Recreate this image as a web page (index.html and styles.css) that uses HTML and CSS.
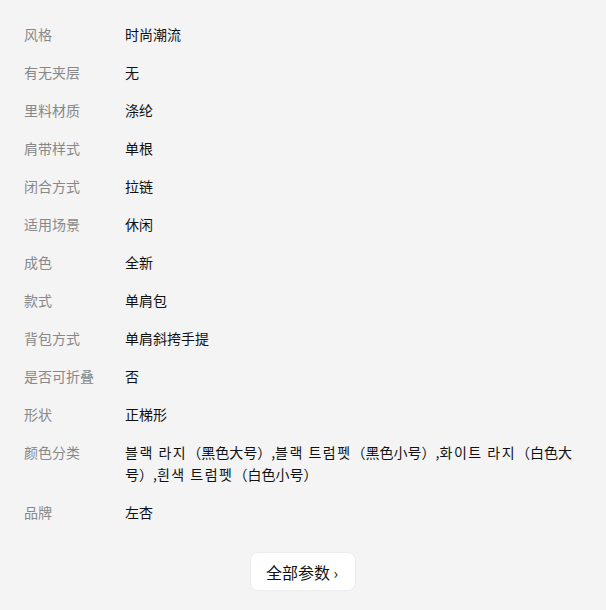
FILE: index.html
```html
<!DOCTYPE html>
<html lang="zh-CN">
<head>
    <meta charset="UTF-8">
    <meta name="viewport" content="width=device-width, initial-scale=1.0">
    <title>商品参数</title>
    <link rel="stylesheet" href="styles.css">
</head>
<body>
    <div class="params">
        <div class="row"><span class="label">风格</span><span class="value">时尚潮流</span></div>
        <div class="row"><span class="label">有无夹层</span><span class="value">无</span></div>
        <div class="row"><span class="label">里料材质</span><span class="value">涤纶</span></div>
        <div class="row"><span class="label">肩带样式</span><span class="value">单根</span></div>
        <div class="row"><span class="label">闭合方式</span><span class="value">拉链</span></div>
        <div class="row"><span class="label">适用场景</span><span class="value">休闲</span></div>
        <div class="row"><span class="label">成色</span><span class="value">全新</span></div>
        <div class="row"><span class="label">款式</span><span class="value">单肩包</span></div>
        <div class="row"><span class="label">背包方式</span><span class="value">单肩斜挎手提</span></div>
        <div class="row"><span class="label">是否可折叠</span><span class="value">否</span></div>
        <div class="row"><span class="label">形状</span><span class="value">正梯形</span></div>
        <div class="row">
            <span class="label">颜色分类</span>
            <span class="value"><span class="ko">블랙 라지</span>（黑色大号）,<span class="ko">블랙 트럼펫</span>（黑色小号）,<span class="ko">화이트 라지</span>（白色大号）,<span class="ko">흰색 트럼펫</span>（白色小号）</span>
        </div>
        <div class="row"><span class="label">品牌</span><span class="value">左杏</span></div>
    </div>
    <div class="more">
        <button class="more-btn">全部参数 <span class="arrow">›</span></button>
    </div>
</body>
</html>
```

FILE: styles.css
```css
body{
    margin: 0;
    background-color: #f4f4f4;
    font-family: "Noto Sans CJK SC", "Noto Sans CJK KR", sans-serif;
}

.params{
    padding: 15px 29px 0 24px;
}

.row{
    display: flex;
    padding: 8px 0;
    font-size: 14px;
    line-height: 22px;
}

.label{
    flex: 0 0 101px;
    color: #888888;
}

.value{
    flex: 1;
    color: #111111;
    word-break: break-all;
}

/* 韩文字形比原图窄一点，稍微拉开 */
.value .ko{
    letter-spacing: 1.5px;
}

.more{
    display: flex;
    justify-content: center;
    padding-top: 21px;
}

.more-btn{
    height: 39px;
    padding: 0 17px 0 15px;
    border: 1px solid #ececec;
    border-radius: 8px;
    background-color: #ffffff;
    font-family: inherit;
    font-size: 16px;
    color: #111111;
}

.more-btn .arrow{
    font-size: 15px;
}
```
